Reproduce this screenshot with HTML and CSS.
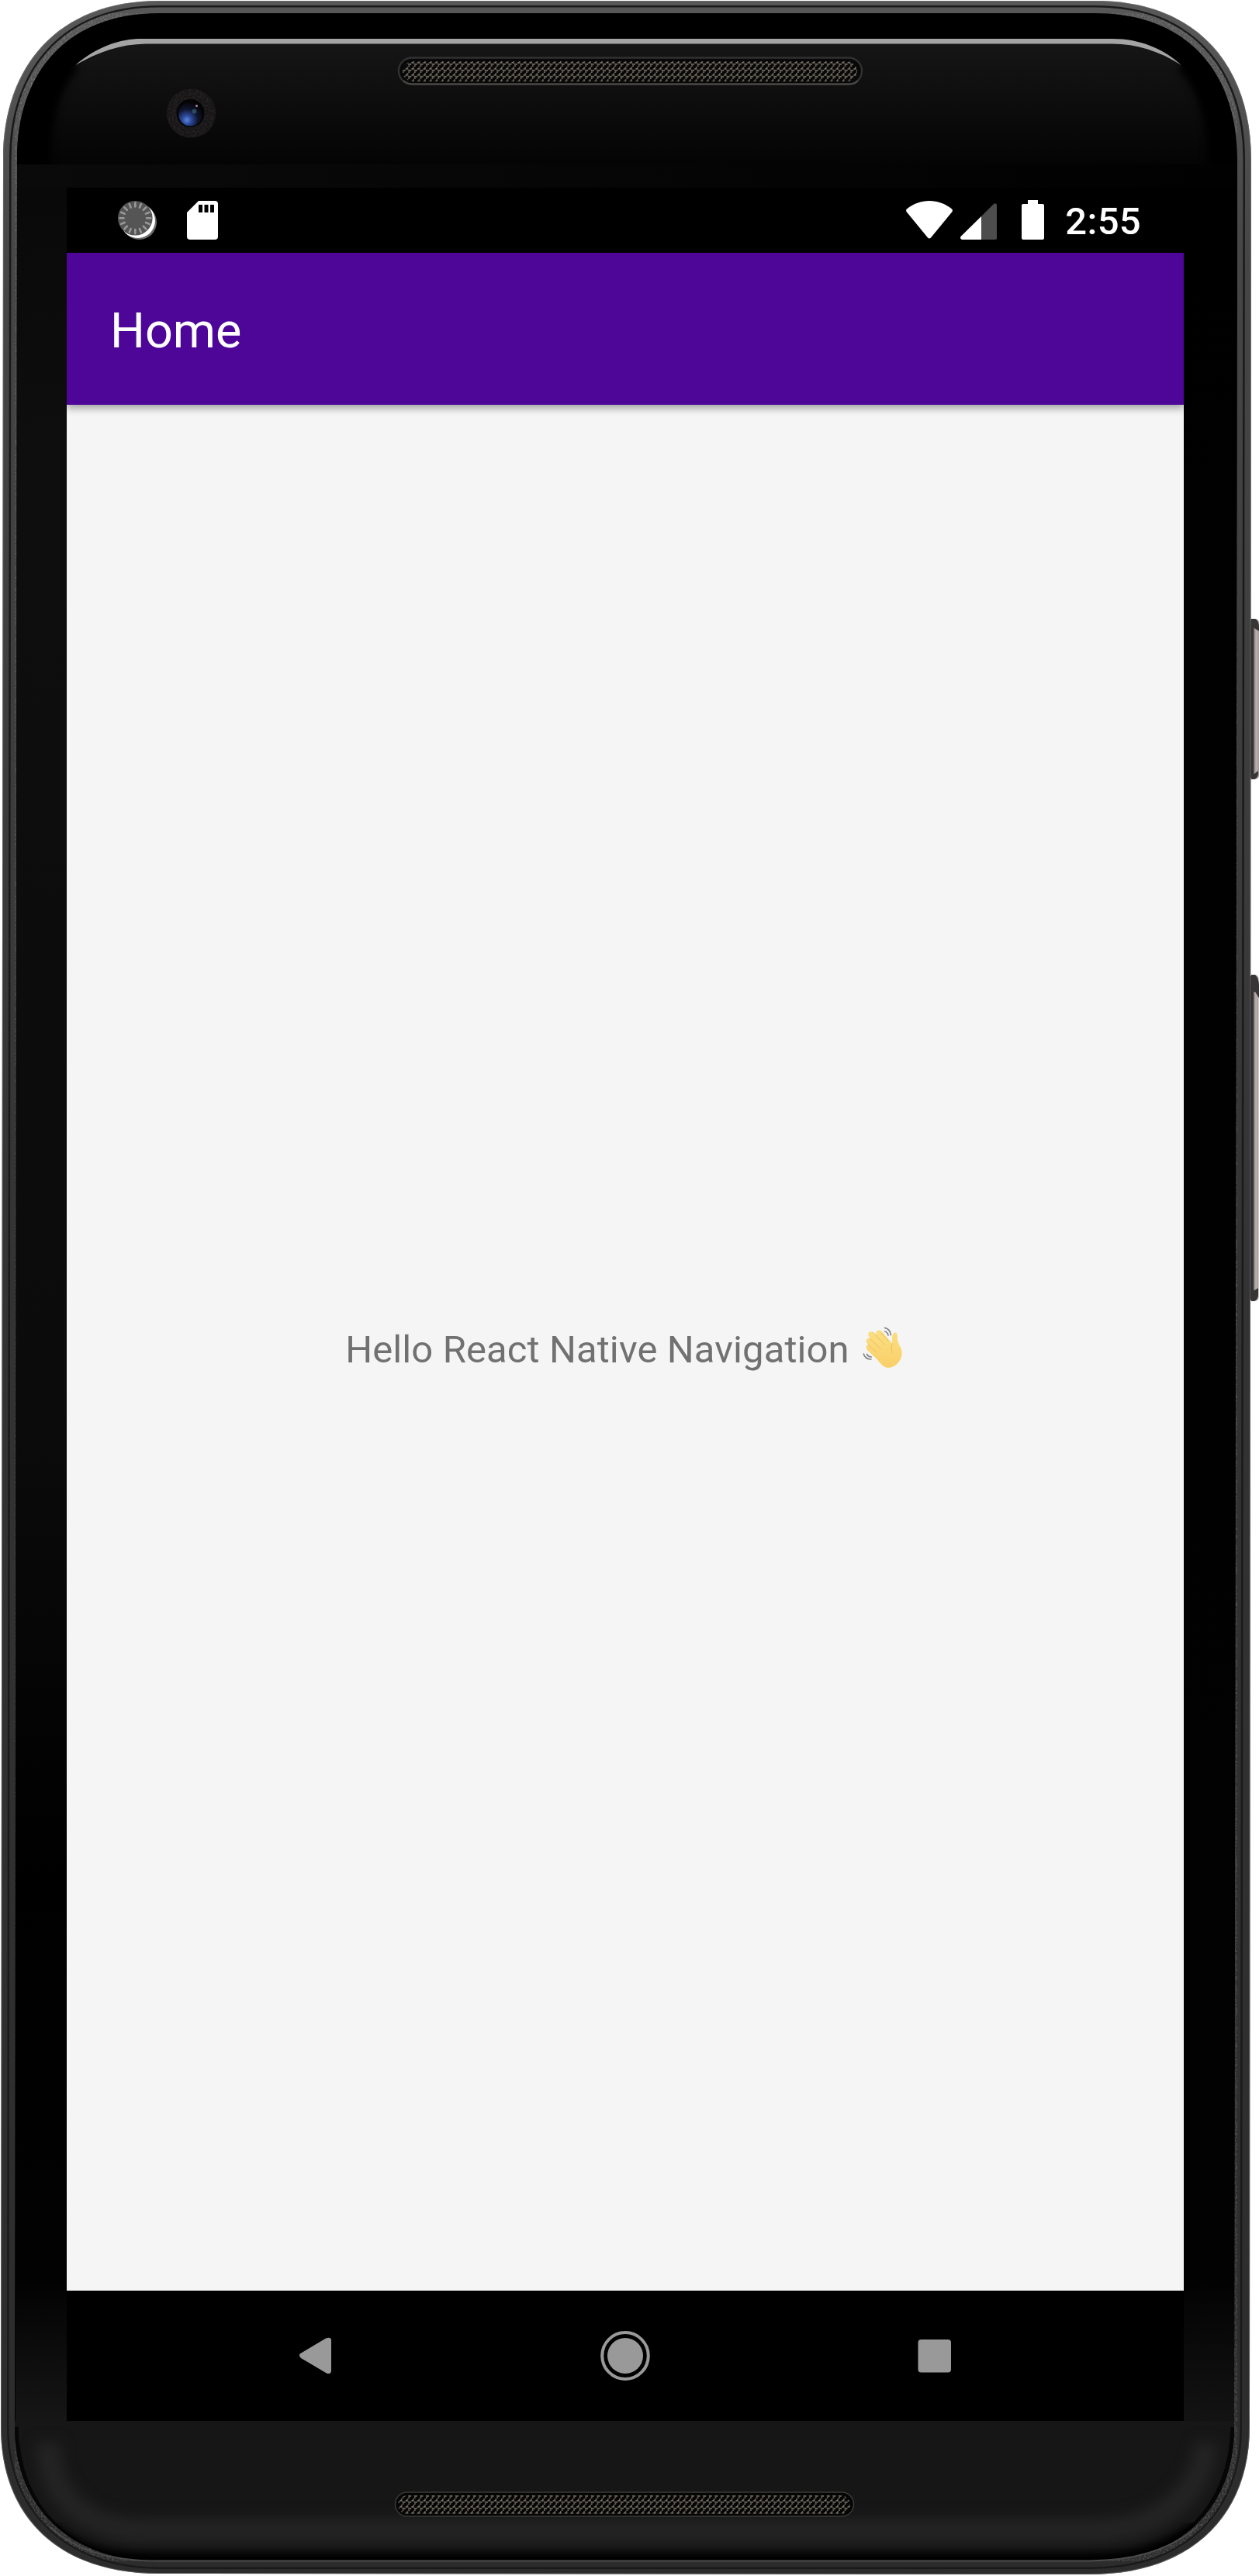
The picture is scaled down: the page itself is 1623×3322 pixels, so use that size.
FILE: index.html
```html
<!DOCTYPE html>
<html lang="en">
<head>
<meta charset="utf-8">
<title>Home</title>
<link rel="stylesheet" href="styles.css">
</head>
<body>
<div class="device">
  <svg class="frame" viewBox="0 0 1623 3322" aria-hidden="true">
    <defs>
      <path id="shell" d="M4 205C4 85 75 1 205 1H1413C1543 1 1613 85 1613 205L1611 3130C1611 3245 1535 3320 1405 3320L205 3319C75 3319 1 3245 1 3130Z"/>
      <path id="glass" d="M22 205C22 95 85 17 205 17H1412C1532 17 1595 95 1595 205L1591 3130C1591 3232 1525 3303 1405 3303H205C90 3303 19 3232 19 3130Z"/>
      <clipPath id="shellClip"><use href="#shell"/></clipPath>
      <clipPath id="glassClip"><use href="#glass"/></clipPath>
      <linearGradient id="top" x1="0" y1="0" x2="0" y2="1"><stop offset="0" stop-color="#161616"/><stop offset="1" stop-color="#040404"/></linearGradient>
      <linearGradient id="left" x1="0" y1="0" x2="0" y2="1"><stop offset="0" stop-color="#090909"/><stop offset=".12" stop-color="#0e0e0e"/><stop offset=".55" stop-color="#0b0b0b"/><stop offset=".75" stop-color="#000"/><stop offset=".93" stop-color="#020202"/><stop offset="1" stop-color="#181818"/></linearGradient>
      <linearGradient id="right" x1="0" y1="0" x2="0" y2="1"><stop offset="0" stop-color="#000"/><stop offset=".93" stop-color="#020202"/><stop offset="1" stop-color="#151515"/></linearGradient>
      <linearGradient id="strip" x1="0" y1="0" x2="1" y2="0"><stop offset="0" stop-color="#0a0a0a"/><stop offset="1" stop-color="#010101"/></linearGradient>
      <linearGradient id="rim" gradientUnits="userSpaceOnUse" x1="0" y1="0" x2="0" y2="3322"><stop offset="0" stop-color="#585858"/><stop offset=".1" stop-color="#464646"/><stop offset=".5" stop-color="#333"/><stop offset="1" stop-color="#2c2c2c"/></linearGradient>
      <linearGradient id="button" x1="0" y1="0" x2="1" y2="0"><stop offset="0" stop-color="#2b2b2b"/><stop offset=".4" stop-color="#3b3538"/><stop offset=".5" stop-color="#8f8787"/><stop offset=".7" stop-color="#bbb1af"/><stop offset="1" stop-color="#a29b9a"/></linearGradient>
      <radialGradient id="lens" cx=".35" cy=".75" r=".75"><stop offset="0" stop-color="#5e86dc"/><stop offset=".25" stop-color="#2d4a9c"/><stop offset=".6" stop-color="#10162f"/><stop offset="1" stop-color="#050508"/></radialGradient>
      <pattern id="mesh" width="7.6" height="8" patternUnits="userSpaceOnUse"><path d="M0 0l3.8 4L0 8M7.6 0L3.8 4" fill="none" stroke="#7d776b" stroke-width="1.6" stroke-dasharray="2 1"/></pattern>
      <filter id="soft" x="-20%" y="-20%" width="140%" height="140%" color-interpolation-filters="sRGB"><feGaussianBlur stdDeviation="9"/></filter>
      <filter id="edge" x="-5%" y="-20%" width="110%" height="140%" color-interpolation-filters="sRGB"><feGaussianBlur stdDeviation="5"/></filter>
      <filter id="grain" x="0" y="0" width="1" height="1"><feTurbulence type="fractalNoise" baseFrequency=".45" numOctaves="2" seed="4"/><feColorMatrix values="0 0 0 0 .6  0 0 0 0 .6  0 0 0 0 .6  1.6 0 0 0 -.65"/><feComposite in2="SourceGraphic" operator="in"/></filter>
    </defs>
    <rect x="1611" y="798" width="12" height="207" rx="5" fill="url(#button)"/>
    <rect x="1611" y="1257" width="11.500" height="421" rx="5" fill="url(#button)"/>
    <path d="M1613 798h5q5 2 5 12v4l-6-4h-4zM1613 1005h4q5-2 5-8v-3l-5 4h-4zM1613 1257h5q5 5 5 14v16l-5-8h-5zM1613 1678h4q5-3 5-8v-9l-5 3h-4z" fill="#373535"/>
    <use href="#shell" fill="url(#rim)"/>
    <g clip-path="url(#shellClip)">
      <use href="#shell" fill="none" stroke="#777" stroke-width="2" opacity=".6"/>
      <use href="#glass" fill="none" stroke="#1a1a1a" stroke-width="20"/>
      <use href="#glass" fill="none" stroke="url(#rim)" stroke-width="15"/>
      <use href="#glass" fill="none" stroke="#fff" stroke-width="16" filter="url(#grain)" opacity=".4"/>
    </g>
    <use href="#glass"/>
    <g clip-path="url(#glassClip)">
      <path d="M57 212C60 150 70 110 97 84C130 65 150 55 185 54H1434C1480 55 1505 66 1523 84C1550 110 1563 150 1564 212Z" fill="url(#top)"/>
      <path d="M57 216C60 150 70 110 97 84M1523 84C1550 110 1563 150 1564 216" fill="none" stroke="#000" stroke-width="14" filter="url(#edge)"/>
      <path d="M97 84C125 60 155 50 182 50H1434C1470 50 1500 63 1523 84C1495 66 1465 56.500 1434 56.500H188C155 57 127 67 97 84Z" fill="#a4a4a4"/>
      <rect x="20" y="212" width="1575" height="31" fill="url(#strip)"/>
      <rect x="20" y="242" width="67" height="2901" fill="url(#left)"/>
      <rect x="1525" y="242" width="70" height="2901" fill="url(#right)"/>
      <path d="M19 3122H1593V3303H19Z" fill="#161616"/>
      <path d="M62 3150C62 3220 110 3264 190 3264H1410C1490 3264 1550 3220 1555 3150" fill="none" stroke="#242424" stroke-width="30" filter="url(#soft)"/>
      <path d="M19 3130C22 3237 90 3305 205 3305H1405C1525 3305 1588 3232 1591 3130" fill="none" stroke="#000" stroke-width="9" opacity=".7"/>
      <path d="M60 3262C98 3294 137 3305 205 3305H1405C1465 3305 1505 3292 1546 3262" fill="none" stroke="#000" stroke-width="26" filter="url(#edge)"/>
    </g>
    <path d="M64 3259C98 3288 137 3302.500 205 3302.500H1405C1460 3302 1505 3290 1542 3260" fill="none" stroke="#4c4c4c" stroke-width="2"/>
    <rect x="514" y="74.500" width="597" height="34" rx="17" fill="#080808" stroke="#303030" stroke-width="2.500"/>
    <path d="M520 104q5 4.500 12 4.500H1094q8 0 12-4.500" fill="none" stroke="#4c4a47" stroke-width="2"/>
    <rect x="519" y="79" width="586" height="26" rx="13" fill="url(#mesh)"/>
    <rect x="509.500" y="3214" width="591" height="31" rx="15.500" fill="#050505" stroke="#3a3a38" stroke-width="1.500"/>
    <rect x="513" y="3218" width="583" height="24" rx="12" fill="url(#mesh)"/>
    <circle cx="246.500" cy="146" r="32" fill="#171515"/>
    <circle cx="246.500" cy="146" r="31" fill="#fff" filter="url(#grain)" opacity=".15"/>
    <circle cx="245.500" cy="146" r="18" fill="#040405"/>
    <circle cx="245.500" cy="147" r="15.500" fill="url(#lens)"/>
    <circle cx="250.500" cy="143.500" r="3" fill="#426a80" opacity=".6"/>
    <circle cx="253.500" cy="136.500" r="1.500" fill="#b58aae"/>
  </svg>
  <main class="screen">
    <div class="status-bar">
      <div class="group">
        <svg class="sync" viewBox="0 0 50 50">
          <circle cx="27.500" cy="27.500" r="22.500" fill="#6c6c6c"/><circle cx="25.500" cy="25.500" r="22.500" fill="#fff"/><circle cx="22.300" cy="22.300" r="22.300" fill="#555"/>
          <g stroke="#999" stroke-width="2.600" stroke-linecap="round">
            <path id="tick" d="M22.300 2.500v5"/>
            <use href="#tick" transform="rotate(22.500 22.300 22.300)"/><use href="#tick" transform="rotate(45 22.300 22.300)"/><use href="#tick" transform="rotate(67.500 22.300 22.300)"/><use href="#tick" transform="rotate(90 22.300 22.300)"/><use href="#tick" transform="rotate(112.500 22.300 22.300)"/><use href="#tick" transform="rotate(135 22.300 22.300)"/><use href="#tick" transform="rotate(157.500 22.300 22.300)"/><use href="#tick" transform="rotate(180 22.300 22.300)"/><use href="#tick" transform="rotate(202.500 22.300 22.300)"/><use href="#tick" transform="rotate(225 22.300 22.300)"/><use href="#tick" transform="rotate(247.500 22.300 22.300)"/><use href="#tick" transform="rotate(270 22.300 22.300)"/><use href="#tick" transform="rotate(292.500 22.300 22.300)"/><use href="#tick" transform="rotate(315 22.300 22.300)"/><use href="#tick" transform="rotate(337.500 22.300 22.300)"/>
          </g>
        </svg>
        <svg class="sd" viewBox="0 0 40 50"><path d="M15 0H36q4 0 4 4V46q0 4-4 4H4q-4 0-4-4V15Z" fill="#fff"/><path d="M15 5h5v10h-5zM22.500 5h5v10h-5zM30 5h5v10h-5z"/></svg>
      </div>
      <div class="group">
        <svg class="wifi" viewBox="0 0 60 50"><path d="M1 10.500C18-3.500 42-3.500 59 10.500Q60.500 12 59.500 14L32 47.500Q30 49.500 28 47.500L.5 14Q-.5 12 1 10.500Z" fill="#fff"/></svg>
        <svg class="signal" viewBox="0 0 47 47"><path d="M27 17L43 1q4-2 4 2V45q0 2-2 2H27Z" fill="#4d4d4d"/><path d="M27 17V47H2q-3-1-1.500-4Z" fill="#fff"/></svg>
        <svg class="battery" viewBox="0 0 29 51"><path d="M8 0H21V5H27q2 0 2 2V49q0 2-2 2H2q-2 0-2-2V7q0-2 2-2H8Z" fill="#fff"/></svg>
        <span class="clock">2:55</span>
      </div>
    </div>
    <header class="app-bar"><h1 class="title">Home</h1></header>
    <section class="content">
      <p class="greeting"><span>Hello React Native Navigation</span>
        <svg class="wave" viewBox="45 33 162 168" role="img" aria-label="Waving hand">
          <defs><linearGradient id="skin" x1="0" y1="0" x2="0" y2="1"><stop offset="0" stop-color="#fbdf82"/><stop offset="1" stop-color="#f9cf69"/></linearGradient></defs>
          <path d="M70 105C57 94 61 78 75 82L78 82C62 64 72 49 86 57L101 65C96 52 111 44 123 55L163 101C162 84 160 70 168 60C177 54 184 62 183 75C181 97 193 108 199 126C206 166 172 198 143 194C126 190 117 178 106 164L69 129C58 119 62 105 70 105Z" fill="url(#skin)"/>
          <path d="M77 82L117 122M87 57L134 105M71 106L103 136M119 60L148 92M163 101Q155 119 164 136" fill="none" stroke="#edbd5e" stroke-width="3" stroke-linecap="round"/>
          <path d="M134 40Q154 44 157 68M134 54Q145 57 147 69M52 141Q57 161 81 162M65 142Q69 152 82 153" fill="none" stroke="#818588" stroke-width="5" stroke-linecap="round"/>
        </svg>
      </p>
    </section>
    <nav class="nav-bar">
      <svg class="nav-icon" viewBox="0 0 64 66"><path d="M11.500 30.500L45 10.500Q51 8.500 52 12V53Q51 57.500 46 55.500L13 36Q10 33.500 11.500 30.500Z" fill="#999"/></svg>
      <svg class="nav-icon" viewBox="0 0 64 66"><ellipse cx="32" cy="33" rx="29.800" ry="30" fill="none" stroke="#999" stroke-width="4"/><ellipse cx="32" cy="33" rx="23" ry="23" fill="#999"/></svg>
      <svg class="nav-icon" viewBox="0 0 64 66"><rect x="10.500" y="12" width="42.500" height="42.500" rx="4" fill="#999"/></svg>
    </nav>
  </main>
</div>
</body>
</html>
```
FILE: styles.css
```css
* { box-sizing: border-box; }
body { margin: 0; background: #fff; font-family: Roboto, "Liberation Sans", sans-serif; }
svg { display: block; flex: none; }
.device { position: relative; width: 1623px; height: 3322px; padding: 242px 97px 200px 86px; overflow: hidden; }
.frame { position: absolute; inset: 0; width: 1623px; height: 3322px; }
.screen { position: relative; height: 2880px; display: grid; grid-template-rows: 84px 196px 1fr 168px; background: #000; }
.status-bar { display: flex; justify-content: space-between; padding: 0 55px 0 66px; }
.group { display: flex; align-items: flex-end; padding-bottom: 17px; }
.sync { width: 50px; height: 50px; }
.sd { width: 40px; height: 50px; margin-left: 39px; }
.wifi { width: 60px; height: 50px; }
.signal { width: 47px; height: 47px; margin-left: 10px; }
.battery { width: 29px; height: 51px; margin-left: 32px; }
.clock { margin-left: 27px; color: #fff; font-size: 49px; font-weight: 500; line-height: 58px; margin-bottom: -6px; letter-spacing: .3px; }
.app-bar { z-index: 1; display: flex; align-items: center; padding-left: 56px; background: #4d0698; box-shadow: 0 5px 9px rgba(0, 0, 0, .32); clip-path: inset(0 0 -24px 0); }
.title { margin: 5px 0 0; color: #fff; font-size: 63px; font-weight: 400; line-height: 74px; }
.content { display: flex; align-items: center; justify-content: center; background: #f5f5f5; }
.greeting { display: flex; align-items: center; gap: 16px; margin: 0; color: #717171; font-size: 49px; line-height: 58px; letter-spacing: .1px; white-space: nowrap; }
.greeting span { padding-top: 5px; margin-left: -2px; }
.wave { width: 54px; height: 56px; }
.nav-bar { display: flex; align-items: center; justify-content: center; gap: 335px; }
.nav-icon { width: 64px; height: 66px; }
```
